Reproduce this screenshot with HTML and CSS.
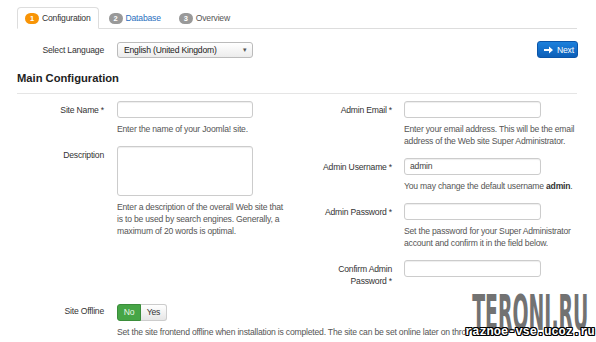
FILE: index.html
```html
<!DOCTYPE html>
<html lang="en">
<head>
  <meta charset="UTF-8">
  <meta name="viewport" content="width=device-width, initial-scale=1.0">
  <title>Joomla! Installation - Configuration</title>
  <link rel="stylesheet" href="styles.css">
</head>
<body>
  <div class="page">
    <ul class="tabs">
      <li class="tab active"><span class="badge">1</span> Configuration</li>
      <li class="tab"><span class="badge">2</span> <span class="link">Database</span></li>
      <li class="tab"><span class="badge">3</span> Overview</li>
    </ul>

    <div class="lang-row">
      <span class="label">Select Language</span>
      <div class="select">
        <span>English (United Kingdom)</span>
        <span class="caret">&#9662;</span>
      </div>
      <button class="btn-next">
        <svg width="9" height="8" viewBox="0 0 9 8"><path d="M0 3h5V0.5L9 4 5 7.5V5H0z" fill="#fff"/></svg>
        Next
      </button>
    </div>

    <h3 class="section-title">Main Configuration</h3>

    <div class="columns">
      <div class="col">
        <div class="field">
          <label class="label">Site Name *</label>
          <div>
            <div class="input"></div>
            <p class="help">Enter the name of your Joomla! site.</p>
          </div>
        </div>
        <div class="field">
          <label class="label">Description</label>
          <div>
            <div class="input textarea"></div>
            <p class="help">Enter a description of the overall Web site that is to be used by search engines. Generally, a maximum of 20 words is optimal.</p>
          </div>
        </div>
      </div>

      <div class="col col-right">
        <div class="field">
          <label class="label">Admin Email *</label>
          <div>
            <div class="input"></div>
            <p class="help">Enter your email address. This will be the email address of the Web site Super Administrator.</p>
          </div>
        </div>
        <div class="field">
          <label class="label">Admin Username *</label>
          <div>
            <div class="input">admin</div>
            <p class="help">You may change the default username <b>admin</b>.</p>
          </div>
        </div>
        <div class="field">
          <label class="label">Admin Password *</label>
          <div>
            <div class="input"></div>
            <p class="help">Set the password for your Super Administrator account and confirm it in the field below.</p>
          </div>
        </div>
        <div class="field">
          <label class="label">Confirm Admin<br>Password *</label>
          <div>
            <div class="input"></div>
          </div>
        </div>
      </div>
    </div>

    <div class="field offline">
      <label class="label">Site Offline</label>
      <div>
        <div class="toggle">
          <span class="opt on">No</span>
          <span class="opt">Yes</span>
        </div>
        <p class="help wide">Set the site frontend offline when installation is completed. The site can be set online later on through the Global Configuration.</p>
      </div>
    </div>

    <div class="wm-big">TERONI.RU</div>
    <div class="wm-small">raznoe-vse.ucoz.ru</div>
  </div>
</body>
</html>
```

FILE: styles.css
```css
body {
  margin: 0;
  background: #fff;
  color: #333;
  font-family: "Liberation Sans", Arial, sans-serif;
  font-size: 8.6px;
  letter-spacing: -0.2px;
}
.page {
  position: relative;
  box-sizing: border-box;
  width: 596px;
  height: 342px;
  padding: 7px 18px 0 17px;
  overflow: hidden;
}

/* steps */
.tabs {
  display: flex;
  list-style: none;
  margin: 0;
  padding: 0;
  width: 560px;
  border-bottom: 1px solid #ddd;
}
.tab {
  display: flex;
  align-items: center;
  gap: 3px;
  height: 20px;
  padding: 0 7px;
  margin-right: 2px;
  margin-bottom: -1px;
  border: 1px solid transparent;
  border-radius: 4px 4px 0 0;
  color: #555;
}
.tab.active {
  border-color: #ddd;
  border-bottom-color: #fff;
  background: #fff;
  color: #333;
}
.badge {
  display: inline-block;
  width: 14px;
  height: 11px;
  border-radius: 6px;
  background: #999;
  color: #fff;
  font-size: 7.5px;
  font-weight: bold;
  line-height: 11px;
  text-align: center;
  letter-spacing: 0;
}
.tab.active .badge {
  background: #f89406;
}
.link {
  color: #2a6fc0;
}

/* language */
.lang-row {
  display: flex;
  align-items: center;
  margin-top: 12px;
  height: 17px;
  width: 561px;
}
.lang-row .label {
  width: 87px;
  margin-right: 13px;
  padding: 0;
}
.select {
  box-sizing: border-box;
  display: flex;
  align-items: center;
  justify-content: space-between;
  width: 136px;
  height: 16px;
  padding: 0 5px 0 6px;
  border: 1px solid #bbb;
  border-radius: 3px;
  background: linear-gradient(#fff, #ececec);
  color: #222;
}
.caret {
  font-size: 7px;
  color: #555;
}
.btn-next {
  display: flex;
  align-items: center;
  gap: 4px;
  margin-left: auto;
  height: 17px;
  width: 41px;
  padding: 0 0 0 6px;
  border: 1px solid #0b55a8;
  border-radius: 3px;
  background: linear-gradient(#1c80dc, #0c5fb8);
  color: #fff;
  font-family: inherit;
  font-size: 8.6px;
  letter-spacing: -0.2px;
}

.section-title {
  margin: 12px 0 0;
  padding-bottom: 7px;
  width: 560px;
  border-bottom: 1px solid #e5e5e5;
  font-size: 11.2px;
  letter-spacing: 0;
  line-height: 16px;
  color: #222;
}

/* form */
.columns {
  display: grid;
  grid-template-columns: 273px 1fr;
  margin-top: 7px;
}
.col {
  display: flex;
  flex-direction: column;
  gap: 11px;
}
.field {
  display: grid;
  grid-template-columns: 87px 1fr;
  column-gap: 13px;
}
.col-right .field {
  grid-template-columns: 102px 1fr;
  column-gap: 12px;
}
.label {
  text-align: right;
  padding-top: 3px;
  line-height: 12px;
  color: #333;
}
.input {
  box-sizing: border-box;
  width: 136px;
  height: 17px;
  padding: 0 5px;
  border: 1px solid #ccc;
  border-radius: 3px;
  box-shadow: inset 0 1px 1px rgba(0, 0, 0, 0.07);
  line-height: 15px;
  color: #444;
}
.col-right .input {
  width: 137px;
}
.textarea {
  height: 50px;
}
.help {
  margin: 5px 0 0;
  max-width: 170px;
  line-height: 12px;
  color: #555;
}
.col-right .help {
  max-width: 176px;
}
.help b {
  color: #333;
}

.offline {
  margin-top: 17px;
}
.offline .label {
  padding-top: 1px;
}
.toggle {
  display: flex;
  height: 17px;
}
.opt {
  box-sizing: border-box;
  height: 17px;
  width: 26px;
  border: 1px solid #ccc;
  border-left: 0;
  border-radius: 0 3px 3px 0;
  background: linear-gradient(#fff, #e6e6e6);
  text-align: center;
  line-height: 15px;
  color: #333;
}
.opt.on {
  width: 24px;
  border: 1px solid #3b8d3b;
  border-radius: 3px 0 0 3px;
  background: #46a546;
  color: #e8f5e8;
}
.help.wide {
  max-width: none;
  white-space: nowrap;
}

/* watermarks over the shot */
.wm-big {
  position: absolute;
  left: 465px;
  top: 288px;
  padding: 0 20px 0 17px;
  background: #fff;
  font-family: "DejaVu Sans Condensed", "DejaVu Sans", sans-serif;
  font-weight: bold;
  font-size: 50px;
  line-height: 50px;
  letter-spacing: 0;
  color: #727272;
  transform: scaleX(0.42);
  transform-origin: left top;
  white-space: nowrap;
}
.wm-small {
  position: absolute;
  left: 465px;
  top: 324px;
  font-family: "Liberation Mono", monospace;
  font-weight: bold;
  font-size: 12px;
  line-height: 16px;
  letter-spacing: 0;
  color: #fff;
  white-space: nowrap;
  text-shadow: 1px 0 0 #000, -1px 0 0 #000, 0 1px 0 #000, 0 -1px 0 #000,
    1px 1px 0 #000, -1px -1px 0 #000, 1px -1px 0 #000, -1px 1px 0 #000;
}
```
